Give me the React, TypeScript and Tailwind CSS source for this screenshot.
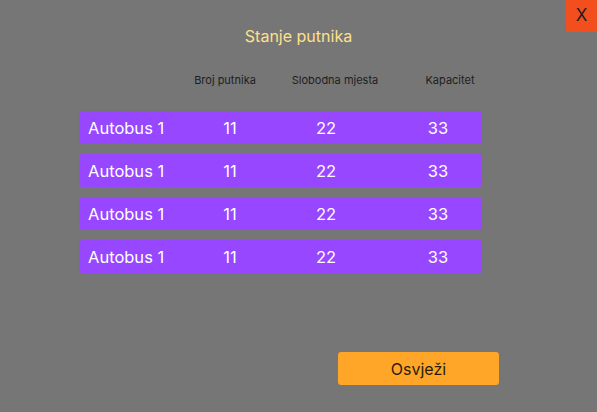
import React from "react";

const rows = [
  { name: "Autobus 1", a: 11, b: 22, c: 33 },
  { name: "Autobus 1", a: 11, b: 22, c: 33 },
  { name: "Autobus 1", a: 11, b: 22, c: 33 },
  { name: "Autobus 1", a: 11, b: 22, c: 33 },
];

export default function App() {
  return (
    <div className="relative w-[597px] h-[412px] bg-[#767676] font-['Inter',sans-serif] overflow-hidden">
      <button className="absolute top-0 right-0 w-[31px] h-[32px] bg-[#f24e1e] rounded-bl-[3px] flex items-center justify-center text-[17px] text-[#1e1e1e]">
        X
      </button>
      <div className="flex flex-col">
        <div className="pt-[26px] h-[46px] text-center text-[16px] leading-[20px] text-[#ffe08a]">
          Stanje putnika
        </div>
        <div className="mt-[26px] h-[16px] flex text-[11px] leading-[16px] text-[#1e1e1e]">
          <span className="ml-[175px] w-[100px] text-center">Broj putnika</span>
          <span className="ml-[10px] w-[100px] text-center">Slobodna mjesta</span>
          <span className="ml-[15px] w-[100px] text-center">Kapacitet</span>
        </div>
        <div className="mt-[23px] ml-[79px] w-[403px] flex flex-col gap-[10px]">
          {rows.map((r, i) => (
            <div
              key={i}
              className="h-[33px] pt-[1px] bg-[#9747ff] rounded-[3px] flex items-center text-[16.5px] text-white"
            >
              <span className="w-[111px] pl-[9px]">{r.name}</span>
              <span className="ml-[20px] w-[40px] text-center">{r.a}</span>
              <span className="ml-[56px] w-[40px] text-center">{r.b}</span>
              <span className="ml-[72px] w-[40px] text-center">{r.c}</span>
            </div>
          ))}
        </div>
        <button className="mt-[79px] ml-[338px] w-[161px] h-[33px] bg-[#ffa629] rounded-[3px] text-[16px] text-[#2a1e0a] flex items-center justify-center">
          Osvježi
        </button>
      </div>
    </div>
  );
}
